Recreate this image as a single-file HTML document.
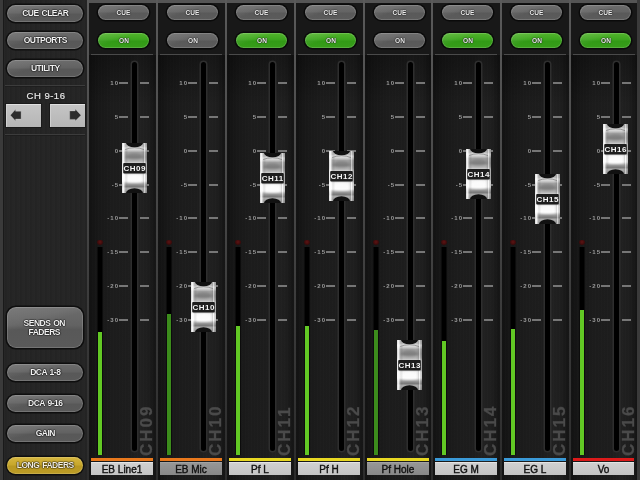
<!DOCTYPE html><html><head><meta charset="utf-8"><style>
*{margin:0;padding:0;box-sizing:border-box}
html,body{width:640px;height:480px;overflow:hidden;background:#1c1c1c;font-family:"Liberation Sans",sans-serif}
#root{position:absolute;left:0;top:0;width:640px;height:480px;will-change:transform;background:#1c1c1c;overflow:hidden}
.a{position:absolute}
#lp{left:3px;top:0;width:84px;height:480px;background:#242424;border-left:1px solid #1a1a1a;
 background-image:repeating-linear-gradient(90deg,rgba(255,255,255,0.01) 0 1px,rgba(0,0,0,0.02) 1px 2px,rgba(0,0,0,0) 2px 3px,rgba(255,255,255,0.006) 3px 5px)}
#lb{left:0;top:0;width:3px;height:480px;background:#3a3a3a}
.btn{position:absolute;left:7px;width:76px;height:17px;border-radius:9px;
 background:linear-gradient(165deg,rgba(255,255,255,0.10) 0%,rgba(255,255,255,0.05) 30%,rgba(255,255,255,0) 42%),linear-gradient(180deg,#6c6c6c 0%,#626262 45%,#585858 55%,#5a5a5a 100%);
 box-shadow:0 0 0 1.5px #0e0e0e, inset 0 0 0 1px rgba(255,255,255,0.16);
 color:#f2f2f2;font-weight:bold;font-size:8.5px;text-align:center;line-height:17px;text-shadow:0 0 1.5px #000,0 0 1px #000,0 0 1px #000}
.btn span{display:inline-block;letter-spacing:-0.5px;word-spacing:1px;margin-right:-0.5px}
.sep{position:absolute;left:5px;width:80px;height:2px;background:#3c3c3c;border-bottom:1px solid #1e1e1e}
.arr{position:absolute;top:104px;width:35px;height:23px;background:linear-gradient(180deg,#c4c4c4,#b6b6b6);
 border-top:1px solid #e0e0e0;border-left:1px solid #d0d0d0;box-shadow:0 0 0 1px #1a1a1a}
.line{top:0;width:2px;height:480px;background:linear-gradient(180deg,#5a5a5a 0%,#4a4a4a 35%,#383838 70%,#2c2c2c 100%)}
.topbg{top:3px;height:51px;background:#181818}
.fadbg{top:55px;height:425px;background:#1b1b1b;
 background-image:linear-gradient(180deg,rgba(0,0,0,0.3) 0,rgba(0,0,0,0) 50px),repeating-linear-gradient(90deg,rgba(255,255,255,0.006) 0 1px,rgba(0,0,0,0.01) 1px 3px),linear-gradient(90deg,#121212 0%,#181818 14%,#1c1c1c 35%,#1d1d1d 60%,#212121 72%,#1e1e1e 88%,#141414 100%)}
.hsep{top:54px;height:1px;background:#4a4a4a}
.sbtn{position:absolute;width:51px;height:15px;border-radius:8px;text-align:center;line-height:15px;font-size:8px;font-weight:bold;color:#f0f0f0;
 box-shadow:0 0 0 1.5px #0a0a0a, inset 0 0 0 1px rgba(255,255,255,0.16);text-shadow:0 0 1.5px #000,0 0 1px #000;}
.sbtn span{display:inline-block;transform:scaleX(0.82)}
.gray{background:linear-gradient(160deg,rgba(255,255,255,0.10) 0%,rgba(255,255,255,0.05) 30%,rgba(255,255,255,0) 42%),linear-gradient(180deg,#6c6c6c 0%,#646464 45%,#595959 55%,#5c5c5c 100%)}
.green{background:linear-gradient(160deg,rgba(255,255,255,0.12) 0%,rgba(255,255,255,0.05) 30%,rgba(255,255,255,0) 42%),linear-gradient(180deg,#52b52c 0%,#3ca41e 45%,#329a16 55%,#379e1a 100%)}
.slot{width:5px;border-radius:2.5px;background:#000;box-shadow:0 0 0 1.5px #2e2e2e}
.tk{height:2px;width:9px;background:#767676}
.sc{font-size:6px;font-weight:bold;color:#9a9a9a;text-align:right;width:27px;letter-spacing:1px;line-height:8px}
.meterbg{width:4px;background:#000;box-shadow:-1px 0 0 #0c0c0c,1px 0 0 #0c0c0c}
.dot{width:6px;height:5px;border-radius:2px 2px 3px 3px;background:radial-gradient(circle at 50% 40%,#5e1414,#360a0a 70%,rgba(30,10,10,0.6))}
.chv{font-size:17px;font-weight:bold;color:#4a4a4a;transform-origin:0 0;transform:rotate(-90deg);white-space:nowrap;line-height:13px;letter-spacing:2px;-webkit-text-stroke:0.3px #4a4a4a}
.bar{height:3px}
.lab{height:13px;font-size:10px;letter-spacing:0px;line-height:13px;-webkit-text-stroke:0.4px #111;text-align:center;color:#111;border-top:1px solid #e4e4e4}
.cap{width:25px;height:50px;overflow:hidden}
.cap .lbl{left:1px;top:20px;width:23px;height:10.5px;color:#f4f4f4;font-size:8px;font-weight:bold;text-align:center;line-height:11px;letter-spacing:0.5px;text-indent:0.5px}
</style></head><body><div id="root">
<svg width="0" height="0" style="position:absolute"><defs>
<linearGradient id="gv" x1="0" y1="0" x2="0" y2="1">
<stop offset="0" stop-color="#b0b0b0"/><stop offset="0.08" stop-color="#c2c2c2"/><stop offset="0.1" stop-color="#e4e4e4"/>
<stop offset="0.14" stop-color="#d0d0d0"/><stop offset="0.19" stop-color="#a2a2a2"/><stop offset="0.28" stop-color="#949494"/>
<stop offset="0.36" stop-color="#a6a6a6"/><stop offset="0.4" stop-color="#cdcdcd"/><stop offset="0.61" stop-color="#c8c8c8"/>
<stop offset="0.64" stop-color="#f4f4f4"/><stop offset="0.76" stop-color="#f8f8f8"/><stop offset="0.82" stop-color="#a8a8a8"/>
<stop offset="0.87" stop-color="#8a8a8a"/><stop offset="0.91" stop-color="#b0b0b0"/><stop offset="1" stop-color="#9c9c9c"/></linearGradient>
<linearGradient id="gh" x1="0" y1="0" x2="1" y2="0">
<stop offset="0" stop-color="#fff" stop-opacity="0.55"/><stop offset="0.06" stop-color="#fff" stop-opacity="0.85"/><stop offset="0.12" stop-color="#fff" stop-opacity="0.2"/><stop offset="0.18" stop-color="#000" stop-opacity="0.06"/><stop offset="0.26" stop-color="#000" stop-opacity="0"/>
<stop offset="0.76" stop-color="#000" stop-opacity="0"/><stop offset="0.84" stop-color="#000" stop-opacity="0.06"/><stop offset="0.9" stop-color="#fff" stop-opacity="0.45"/><stop offset="1" stop-color="#000" stop-opacity="0.15"/></linearGradient>
<filter id="bl" x="-30%" y="-60%" width="160%" height="220%"><feGaussianBlur stdDeviation="1"/></filter>
</defs></svg>
<div class="a" id="lb"></div><div class="a" id="lp"></div>
<div class="btn" style="top:5px;height:17px;line-height:17px"><span>CUE CLEAR</span></div>
<div class="btn" style="top:32px;height:17px;line-height:17px"><span>OUTPORTS</span></div>
<div class="btn" style="top:60px;height:17px;line-height:17px"><span>UTILITY</span></div>
<div class="sep" style="top:85px"></div>
<div class="a" style="left:3px;width:84px;text-align:center;color:#e8e8e8;font-size:9.5px;font-weight:normal;-webkit-text-stroke:0.2px #e8e8e8;line-height:12px;top:90px;padding-left:2px;letter-spacing:0.5px;text-shadow:0 0 1.5px #000">CH 9-16</div>
<div class="arr" style="left:6px"><svg width="35" height="23" style="position:absolute;left:-1px;top:-1px"><polygon points="4.4,11.2 9.6,5.3 9.6,7.3 15.1,7.3 15.1,15.1 9.6,15.1 9.6,16.9" fill="#2c2c2c" stroke="#d8d8d8" stroke-width="0.6" stroke-opacity="0.5"/></svg></div>
<div class="arr" style="left:50px"><svg width="35" height="23" style="position:absolute;left:-1px;top:-1px"><polygon points="31,11.2 25.2,5.1 25.2,6.9 19.7,6.9 19.7,15.4 25.2,15.4 25.2,17.1" fill="#2c2c2c" stroke="#d8d8d8" stroke-width="0.6" stroke-opacity="0.5"/></svg></div>
<div class="sep" style="top:134px"></div>
<div class="btn" style="top:307px;height:41px;border-radius:9px;line-height:9px;padding-top:12px;padding-right:2px"><span>SENDS ON<br>FADERS</span></div>
<div class="btn" style="top:364px"><span>DCA 1-8</span></div>
<div class="btn" style="top:395px"><span>DCA 9-16</span></div>
<div class="btn" style="top:425px"><span>GAIN</span></div>
<div class="btn" style="top:457px;background:linear-gradient(180deg,#d6b640 0%,#c8a82c 45%,#b89822 55%,#bc9c26 100%);color:#f6f0dc"><span>LONG FADERS</span></div>
<div class="a" style="left:87px;top:0;width:553px;height:3px;background:#555"></div>
<div class="a topbg" style="left:89px;width:67px"></div>
<div class="a fadbg" style="left:89px;width:67px"></div>
<div class="a hsep" style="left:91px;width:62px"></div>
<div class="a line" style="left:87px"></div>
<div class="sbtn gray" style="left:98px;top:5px"><span>CUE</span></div>
<div class="sbtn green" style="left:98px;top:33px"><span>ON</span></div>
<div class="a sc" style="left:92px;top:79.2px">10</div>
<div class="a tk" style="left:119px;top:82.2px"></div>
<div class="a tk" style="left:140px;top:82.2px"></div>
<div class="a sc" style="left:92px;top:113.0px">5</div>
<div class="a tk" style="left:119px;top:116.0px"></div>
<div class="a tk" style="left:140px;top:116.0px"></div>
<div class="a sc" style="left:92px;top:146.9px">0</div>
<div class="a tk" style="left:119px;top:149.9px"></div>
<div class="a tk" style="left:140px;top:149.9px"></div>
<div class="a sc" style="left:92px;top:180.5px">-5</div>
<div class="a tk" style="left:119px;top:183.5px"></div>
<div class="a tk" style="left:140px;top:183.5px"></div>
<div class="a sc" style="left:92px;top:214.2px">-10</div>
<div class="a tk" style="left:119px;top:217.2px"></div>
<div class="a tk" style="left:140px;top:217.2px"></div>
<div class="a sc" style="left:92px;top:248.2px">-15</div>
<div class="a tk" style="left:119px;top:251.2px"></div>
<div class="a tk" style="left:140px;top:251.2px"></div>
<div class="a sc" style="left:92px;top:281.8px">-20</div>
<div class="a tk" style="left:119px;top:284.8px"></div>
<div class="a tk" style="left:140px;top:284.8px"></div>
<div class="a sc" style="left:92px;top:315.8px">-30</div>
<div class="a tk" style="left:119px;top:318.8px"></div>
<div class="a tk" style="left:140px;top:318.8px"></div>
<div class="a slot" style="left:132px;top:62px;height:389px"></div>
<div class="a dot" style="left:97px;top:240px"></div>
<div class="a meterbg" style="left:98px;top:247px;height:208px"></div>
<div class="a" style="left:98px;top:332px;width:4px;height:123px;background:#62c824"></div>
<div class="a chv" style="left:140px;top:456px">CH09</div>
<div class="a bar" style="left:91px;top:458px;width:62px;background:#e8781c"></div>
<div class="a lab" style="left:91px;top:462px;width:62px;background:linear-gradient(180deg,#d0d0d0,#c4c4c4);border-top-color:#e4e4e4">EB Line1</div>
<div class="a cap" style="left:122px;top:143px"><svg width="25" height="50" style="position:absolute;left:0;top:0">
<rect width="25" height="50" fill="url(#gv)"/>
<ellipse cx="12.5" cy="13.5" rx="8" ry="3.5" fill="#000" opacity="0.14" filter="url(#bl)"/><rect x="3" y="16.5" width="19" height="2.5" fill="#fff" opacity="0.18" filter="url(#bl)"/>
<path d="M3,6.5 Q12.5,3 22,6.5" stroke="#7a7a7a" stroke-width="0.9" fill="none" opacity="0.8"/>
<ellipse cx="12.5" cy="36" rx="9" ry="4" fill="#fff" opacity="0.6" filter="url(#bl)"/><ellipse cx="12.5" cy="43" rx="9" ry="2.2" fill="#000" opacity="0.12" filter="url(#bl)"/>
<rect width="25" height="50" fill="url(#gh)"/>
<ellipse cx="12.5" cy="-0.5" rx="8.6" ry="4.8" fill="#111"/><ellipse cx="12.5" cy="50.5" rx="8.6" ry="5.2" fill="#111"/>
<rect x="1.2" y="20" width="22.6" height="10.4" rx="1" fill="#1d1d1d"/></svg><div class="a lbl">CH09</div></div>
<div class="a topbg" style="left:158px;width:67px"></div>
<div class="a fadbg" style="left:158px;width:67px"></div>
<div class="a hsep" style="left:160px;width:62px"></div>
<div class="a line" style="left:156px"></div>
<div class="sbtn gray" style="left:167px;top:5px"><span>CUE</span></div>
<div class="sbtn gray" style="left:167px;top:33px"><span>ON</span></div>
<div class="a sc" style="left:161px;top:79.2px">10</div>
<div class="a tk" style="left:188px;top:82.2px"></div>
<div class="a tk" style="left:209px;top:82.2px"></div>
<div class="a sc" style="left:161px;top:113.0px">5</div>
<div class="a tk" style="left:188px;top:116.0px"></div>
<div class="a tk" style="left:209px;top:116.0px"></div>
<div class="a sc" style="left:161px;top:146.9px">0</div>
<div class="a tk" style="left:188px;top:149.9px"></div>
<div class="a tk" style="left:209px;top:149.9px"></div>
<div class="a sc" style="left:161px;top:180.5px">-5</div>
<div class="a tk" style="left:188px;top:183.5px"></div>
<div class="a tk" style="left:209px;top:183.5px"></div>
<div class="a sc" style="left:161px;top:214.2px">-10</div>
<div class="a tk" style="left:188px;top:217.2px"></div>
<div class="a tk" style="left:209px;top:217.2px"></div>
<div class="a sc" style="left:161px;top:248.2px">-15</div>
<div class="a tk" style="left:188px;top:251.2px"></div>
<div class="a tk" style="left:209px;top:251.2px"></div>
<div class="a sc" style="left:161px;top:281.8px">-20</div>
<div class="a tk" style="left:188px;top:284.8px"></div>
<div class="a tk" style="left:209px;top:284.8px"></div>
<div class="a sc" style="left:161px;top:315.8px">-30</div>
<div class="a tk" style="left:188px;top:318.8px"></div>
<div class="a tk" style="left:209px;top:318.8px"></div>
<div class="a slot" style="left:201px;top:62px;height:389px"></div>
<div class="a dot" style="left:166px;top:240px"></div>
<div class="a meterbg" style="left:167px;top:247px;height:208px"></div>
<div class="a" style="left:167px;top:314px;width:4px;height:141px;background:#3c8c1c"></div>
<div class="a chv" style="left:209px;top:456px">CH10</div>
<div class="a bar" style="left:160px;top:458px;width:62px;background:#e8781c"></div>
<div class="a lab" style="left:160px;top:462px;width:62px;background:linear-gradient(180deg,#969696,#888888);border-top-color:#a4a4a4">EB Mic</div>
<div class="a cap" style="left:191px;top:282px"><svg width="25" height="50" style="position:absolute;left:0;top:0">
<rect width="25" height="50" fill="url(#gv)"/>
<ellipse cx="12.5" cy="13.5" rx="8" ry="3.5" fill="#000" opacity="0.14" filter="url(#bl)"/><rect x="3" y="16.5" width="19" height="2.5" fill="#fff" opacity="0.18" filter="url(#bl)"/>
<path d="M3,6.5 Q12.5,3 22,6.5" stroke="#7a7a7a" stroke-width="0.9" fill="none" opacity="0.8"/>
<ellipse cx="12.5" cy="36" rx="9" ry="4" fill="#fff" opacity="0.6" filter="url(#bl)"/><ellipse cx="12.5" cy="43" rx="9" ry="2.2" fill="#000" opacity="0.12" filter="url(#bl)"/>
<rect width="25" height="50" fill="url(#gh)"/>
<ellipse cx="12.5" cy="-0.5" rx="8.6" ry="4.8" fill="#111"/><ellipse cx="12.5" cy="50.5" rx="8.6" ry="5.2" fill="#111"/>
<rect x="1.2" y="20" width="22.6" height="10.4" rx="1" fill="#1d1d1d"/></svg><div class="a lbl">CH10</div></div>
<div class="a topbg" style="left:227px;width:67px"></div>
<div class="a fadbg" style="left:227px;width:67px"></div>
<div class="a hsep" style="left:229px;width:62px"></div>
<div class="a line" style="left:225px"></div>
<div class="sbtn gray" style="left:236px;top:5px"><span>CUE</span></div>
<div class="sbtn green" style="left:236px;top:33px"><span>ON</span></div>
<div class="a sc" style="left:230px;top:79.2px">10</div>
<div class="a tk" style="left:257px;top:82.2px"></div>
<div class="a tk" style="left:278px;top:82.2px"></div>
<div class="a sc" style="left:230px;top:113.0px">5</div>
<div class="a tk" style="left:257px;top:116.0px"></div>
<div class="a tk" style="left:278px;top:116.0px"></div>
<div class="a sc" style="left:230px;top:146.9px">0</div>
<div class="a tk" style="left:257px;top:149.9px"></div>
<div class="a tk" style="left:278px;top:149.9px"></div>
<div class="a sc" style="left:230px;top:180.5px">-5</div>
<div class="a tk" style="left:257px;top:183.5px"></div>
<div class="a tk" style="left:278px;top:183.5px"></div>
<div class="a sc" style="left:230px;top:214.2px">-10</div>
<div class="a tk" style="left:257px;top:217.2px"></div>
<div class="a tk" style="left:278px;top:217.2px"></div>
<div class="a sc" style="left:230px;top:248.2px">-15</div>
<div class="a tk" style="left:257px;top:251.2px"></div>
<div class="a tk" style="left:278px;top:251.2px"></div>
<div class="a sc" style="left:230px;top:281.8px">-20</div>
<div class="a tk" style="left:257px;top:284.8px"></div>
<div class="a tk" style="left:278px;top:284.8px"></div>
<div class="a sc" style="left:230px;top:315.8px">-30</div>
<div class="a tk" style="left:257px;top:318.8px"></div>
<div class="a tk" style="left:278px;top:318.8px"></div>
<div class="a slot" style="left:270px;top:62px;height:389px"></div>
<div class="a dot" style="left:235px;top:240px"></div>
<div class="a meterbg" style="left:236px;top:247px;height:208px"></div>
<div class="a" style="left:236px;top:326px;width:4px;height:129px;background:#62c824"></div>
<div class="a chv" style="left:278px;top:456px">CH11</div>
<div class="a bar" style="left:229px;top:458px;width:62px;background:#e8d822"></div>
<div class="a lab" style="left:229px;top:462px;width:62px;background:linear-gradient(180deg,#d0d0d0,#c4c4c4);border-top-color:#e4e4e4">Pf L</div>
<div class="a cap" style="left:260px;top:153px"><svg width="25" height="50" style="position:absolute;left:0;top:0">
<rect width="25" height="50" fill="url(#gv)"/>
<ellipse cx="12.5" cy="13.5" rx="8" ry="3.5" fill="#000" opacity="0.14" filter="url(#bl)"/><rect x="3" y="16.5" width="19" height="2.5" fill="#fff" opacity="0.18" filter="url(#bl)"/>
<path d="M3,6.5 Q12.5,3 22,6.5" stroke="#7a7a7a" stroke-width="0.9" fill="none" opacity="0.8"/>
<ellipse cx="12.5" cy="36" rx="9" ry="4" fill="#fff" opacity="0.6" filter="url(#bl)"/><ellipse cx="12.5" cy="43" rx="9" ry="2.2" fill="#000" opacity="0.12" filter="url(#bl)"/>
<rect width="25" height="50" fill="url(#gh)"/>
<ellipse cx="12.5" cy="-0.5" rx="8.6" ry="4.8" fill="#111"/><ellipse cx="12.5" cy="50.5" rx="8.6" ry="5.2" fill="#111"/>
<rect x="1.2" y="20" width="22.6" height="10.4" rx="1" fill="#1d1d1d"/></svg><div class="a lbl">CH11</div></div>
<div class="a topbg" style="left:296px;width:67px"></div>
<div class="a fadbg" style="left:296px;width:67px"></div>
<div class="a hsep" style="left:298px;width:62px"></div>
<div class="a line" style="left:294px"></div>
<div class="sbtn gray" style="left:305px;top:5px"><span>CUE</span></div>
<div class="sbtn green" style="left:305px;top:33px"><span>ON</span></div>
<div class="a sc" style="left:299px;top:79.2px">10</div>
<div class="a tk" style="left:326px;top:82.2px"></div>
<div class="a tk" style="left:347px;top:82.2px"></div>
<div class="a sc" style="left:299px;top:113.0px">5</div>
<div class="a tk" style="left:326px;top:116.0px"></div>
<div class="a tk" style="left:347px;top:116.0px"></div>
<div class="a sc" style="left:299px;top:146.9px">0</div>
<div class="a tk" style="left:326px;top:149.9px"></div>
<div class="a tk" style="left:347px;top:149.9px"></div>
<div class="a sc" style="left:299px;top:180.5px">-5</div>
<div class="a tk" style="left:326px;top:183.5px"></div>
<div class="a tk" style="left:347px;top:183.5px"></div>
<div class="a sc" style="left:299px;top:214.2px">-10</div>
<div class="a tk" style="left:326px;top:217.2px"></div>
<div class="a tk" style="left:347px;top:217.2px"></div>
<div class="a sc" style="left:299px;top:248.2px">-15</div>
<div class="a tk" style="left:326px;top:251.2px"></div>
<div class="a tk" style="left:347px;top:251.2px"></div>
<div class="a sc" style="left:299px;top:281.8px">-20</div>
<div class="a tk" style="left:326px;top:284.8px"></div>
<div class="a tk" style="left:347px;top:284.8px"></div>
<div class="a sc" style="left:299px;top:315.8px">-30</div>
<div class="a tk" style="left:326px;top:318.8px"></div>
<div class="a tk" style="left:347px;top:318.8px"></div>
<div class="a slot" style="left:339px;top:62px;height:389px"></div>
<div class="a dot" style="left:304px;top:240px"></div>
<div class="a meterbg" style="left:305px;top:247px;height:208px"></div>
<div class="a" style="left:305px;top:326px;width:4px;height:129px;background:#62c824"></div>
<div class="a chv" style="left:347px;top:456px">CH12</div>
<div class="a bar" style="left:298px;top:458px;width:62px;background:#e8d822"></div>
<div class="a lab" style="left:298px;top:462px;width:62px;background:linear-gradient(180deg,#d0d0d0,#c4c4c4);border-top-color:#e4e4e4">Pf H</div>
<div class="a cap" style="left:329px;top:151px"><svg width="25" height="50" style="position:absolute;left:0;top:0">
<rect width="25" height="50" fill="url(#gv)"/>
<ellipse cx="12.5" cy="13.5" rx="8" ry="3.5" fill="#000" opacity="0.14" filter="url(#bl)"/><rect x="3" y="16.5" width="19" height="2.5" fill="#fff" opacity="0.18" filter="url(#bl)"/>
<path d="M3,6.5 Q12.5,3 22,6.5" stroke="#7a7a7a" stroke-width="0.9" fill="none" opacity="0.8"/>
<ellipse cx="12.5" cy="36" rx="9" ry="4" fill="#fff" opacity="0.6" filter="url(#bl)"/><ellipse cx="12.5" cy="43" rx="9" ry="2.2" fill="#000" opacity="0.12" filter="url(#bl)"/>
<rect width="25" height="50" fill="url(#gh)"/>
<ellipse cx="12.5" cy="-0.5" rx="8.6" ry="4.8" fill="#111"/><ellipse cx="12.5" cy="50.5" rx="8.6" ry="5.2" fill="#111"/>
<rect x="1.2" y="20" width="22.6" height="10.4" rx="1" fill="#1d1d1d"/></svg><div class="a lbl">CH12</div></div>
<div class="a topbg" style="left:365px;width:66px"></div>
<div class="a fadbg" style="left:365px;width:66px"></div>
<div class="a hsep" style="left:367px;width:62px"></div>
<div class="a line" style="left:363px"></div>
<div class="sbtn gray" style="left:374px;top:5px"><span>CUE</span></div>
<div class="sbtn gray" style="left:374px;top:33px"><span>ON</span></div>
<div class="a sc" style="left:368px;top:79.2px">10</div>
<div class="a tk" style="left:395px;top:82.2px"></div>
<div class="a tk" style="left:416px;top:82.2px"></div>
<div class="a sc" style="left:368px;top:113.0px">5</div>
<div class="a tk" style="left:395px;top:116.0px"></div>
<div class="a tk" style="left:416px;top:116.0px"></div>
<div class="a sc" style="left:368px;top:146.9px">0</div>
<div class="a tk" style="left:395px;top:149.9px"></div>
<div class="a tk" style="left:416px;top:149.9px"></div>
<div class="a sc" style="left:368px;top:180.5px">-5</div>
<div class="a tk" style="left:395px;top:183.5px"></div>
<div class="a tk" style="left:416px;top:183.5px"></div>
<div class="a sc" style="left:368px;top:214.2px">-10</div>
<div class="a tk" style="left:395px;top:217.2px"></div>
<div class="a tk" style="left:416px;top:217.2px"></div>
<div class="a sc" style="left:368px;top:248.2px">-15</div>
<div class="a tk" style="left:395px;top:251.2px"></div>
<div class="a tk" style="left:416px;top:251.2px"></div>
<div class="a sc" style="left:368px;top:281.8px">-20</div>
<div class="a tk" style="left:395px;top:284.8px"></div>
<div class="a tk" style="left:416px;top:284.8px"></div>
<div class="a sc" style="left:368px;top:315.8px">-30</div>
<div class="a tk" style="left:395px;top:318.8px"></div>
<div class="a tk" style="left:416px;top:318.8px"></div>
<div class="a slot" style="left:408px;top:62px;height:389px"></div>
<div class="a dot" style="left:373px;top:240px"></div>
<div class="a meterbg" style="left:374px;top:247px;height:208px"></div>
<div class="a" style="left:374px;top:330px;width:4px;height:125px;background:#3c8c1c"></div>
<div class="a chv" style="left:416px;top:456px">CH13</div>
<div class="a bar" style="left:367px;top:458px;width:62px;background:#e8d822"></div>
<div class="a lab" style="left:367px;top:462px;width:62px;background:linear-gradient(180deg,#969696,#888888);border-top-color:#a4a4a4">Pf Hole</div>
<div class="a cap" style="left:397px;top:340px"><svg width="25" height="50" style="position:absolute;left:0;top:0">
<rect width="25" height="50" fill="url(#gv)"/>
<ellipse cx="12.5" cy="13.5" rx="8" ry="3.5" fill="#000" opacity="0.14" filter="url(#bl)"/><rect x="3" y="16.5" width="19" height="2.5" fill="#fff" opacity="0.18" filter="url(#bl)"/>
<path d="M3,6.5 Q12.5,3 22,6.5" stroke="#7a7a7a" stroke-width="0.9" fill="none" opacity="0.8"/>
<ellipse cx="12.5" cy="36" rx="9" ry="4" fill="#fff" opacity="0.6" filter="url(#bl)"/><ellipse cx="12.5" cy="43" rx="9" ry="2.2" fill="#000" opacity="0.12" filter="url(#bl)"/>
<rect width="25" height="50" fill="url(#gh)"/>
<ellipse cx="12.5" cy="-0.5" rx="8.6" ry="4.8" fill="#111"/><ellipse cx="12.5" cy="50.5" rx="8.6" ry="5.2" fill="#111"/>
<rect x="1.2" y="20" width="22.6" height="10.4" rx="1" fill="#1d1d1d"/></svg><div class="a lbl">CH13</div></div>
<div class="a topbg" style="left:433px;width:67px"></div>
<div class="a fadbg" style="left:433px;width:67px"></div>
<div class="a hsep" style="left:435px;width:62px"></div>
<div class="a line" style="left:431px"></div>
<div class="sbtn gray" style="left:442px;top:5px"><span>CUE</span></div>
<div class="sbtn green" style="left:442px;top:33px"><span>ON</span></div>
<div class="a sc" style="left:436px;top:79.2px">10</div>
<div class="a tk" style="left:463px;top:82.2px"></div>
<div class="a tk" style="left:484px;top:82.2px"></div>
<div class="a sc" style="left:436px;top:113.0px">5</div>
<div class="a tk" style="left:463px;top:116.0px"></div>
<div class="a tk" style="left:484px;top:116.0px"></div>
<div class="a sc" style="left:436px;top:146.9px">0</div>
<div class="a tk" style="left:463px;top:149.9px"></div>
<div class="a tk" style="left:484px;top:149.9px"></div>
<div class="a sc" style="left:436px;top:180.5px">-5</div>
<div class="a tk" style="left:463px;top:183.5px"></div>
<div class="a tk" style="left:484px;top:183.5px"></div>
<div class="a sc" style="left:436px;top:214.2px">-10</div>
<div class="a tk" style="left:463px;top:217.2px"></div>
<div class="a tk" style="left:484px;top:217.2px"></div>
<div class="a sc" style="left:436px;top:248.2px">-15</div>
<div class="a tk" style="left:463px;top:251.2px"></div>
<div class="a tk" style="left:484px;top:251.2px"></div>
<div class="a sc" style="left:436px;top:281.8px">-20</div>
<div class="a tk" style="left:463px;top:284.8px"></div>
<div class="a tk" style="left:484px;top:284.8px"></div>
<div class="a sc" style="left:436px;top:315.8px">-30</div>
<div class="a tk" style="left:463px;top:318.8px"></div>
<div class="a tk" style="left:484px;top:318.8px"></div>
<div class="a slot" style="left:476px;top:62px;height:389px"></div>
<div class="a dot" style="left:441px;top:240px"></div>
<div class="a meterbg" style="left:442px;top:247px;height:208px"></div>
<div class="a" style="left:442px;top:341px;width:4px;height:114px;background:#62c824"></div>
<div class="a chv" style="left:484px;top:456px">CH14</div>
<div class="a bar" style="left:435px;top:458px;width:62px;background:#3a9ad8"></div>
<div class="a lab" style="left:435px;top:462px;width:62px;background:linear-gradient(180deg,#d0d0d0,#c4c4c4);border-top-color:#e4e4e4">EG M</div>
<div class="a cap" style="left:466px;top:149px"><svg width="25" height="50" style="position:absolute;left:0;top:0">
<rect width="25" height="50" fill="url(#gv)"/>
<ellipse cx="12.5" cy="13.5" rx="8" ry="3.5" fill="#000" opacity="0.14" filter="url(#bl)"/><rect x="3" y="16.5" width="19" height="2.5" fill="#fff" opacity="0.18" filter="url(#bl)"/>
<path d="M3,6.5 Q12.5,3 22,6.5" stroke="#7a7a7a" stroke-width="0.9" fill="none" opacity="0.8"/>
<ellipse cx="12.5" cy="36" rx="9" ry="4" fill="#fff" opacity="0.6" filter="url(#bl)"/><ellipse cx="12.5" cy="43" rx="9" ry="2.2" fill="#000" opacity="0.12" filter="url(#bl)"/>
<rect width="25" height="50" fill="url(#gh)"/>
<ellipse cx="12.5" cy="-0.5" rx="8.6" ry="4.8" fill="#111"/><ellipse cx="12.5" cy="50.5" rx="8.6" ry="5.2" fill="#111"/>
<rect x="1.2" y="20" width="22.6" height="10.4" rx="1" fill="#1d1d1d"/></svg><div class="a lbl">CH14</div></div>
<div class="a topbg" style="left:502px;width:67px"></div>
<div class="a fadbg" style="left:502px;width:67px"></div>
<div class="a hsep" style="left:504px;width:62px"></div>
<div class="a line" style="left:500px"></div>
<div class="sbtn gray" style="left:511px;top:5px"><span>CUE</span></div>
<div class="sbtn green" style="left:511px;top:33px"><span>ON</span></div>
<div class="a sc" style="left:505px;top:79.2px">10</div>
<div class="a tk" style="left:532px;top:82.2px"></div>
<div class="a tk" style="left:553px;top:82.2px"></div>
<div class="a sc" style="left:505px;top:113.0px">5</div>
<div class="a tk" style="left:532px;top:116.0px"></div>
<div class="a tk" style="left:553px;top:116.0px"></div>
<div class="a sc" style="left:505px;top:146.9px">0</div>
<div class="a tk" style="left:532px;top:149.9px"></div>
<div class="a tk" style="left:553px;top:149.9px"></div>
<div class="a sc" style="left:505px;top:180.5px">-5</div>
<div class="a tk" style="left:532px;top:183.5px"></div>
<div class="a tk" style="left:553px;top:183.5px"></div>
<div class="a sc" style="left:505px;top:214.2px">-10</div>
<div class="a tk" style="left:532px;top:217.2px"></div>
<div class="a tk" style="left:553px;top:217.2px"></div>
<div class="a sc" style="left:505px;top:248.2px">-15</div>
<div class="a tk" style="left:532px;top:251.2px"></div>
<div class="a tk" style="left:553px;top:251.2px"></div>
<div class="a sc" style="left:505px;top:281.8px">-20</div>
<div class="a tk" style="left:532px;top:284.8px"></div>
<div class="a tk" style="left:553px;top:284.8px"></div>
<div class="a sc" style="left:505px;top:315.8px">-30</div>
<div class="a tk" style="left:532px;top:318.8px"></div>
<div class="a tk" style="left:553px;top:318.8px"></div>
<div class="a slot" style="left:545px;top:62px;height:389px"></div>
<div class="a dot" style="left:510px;top:240px"></div>
<div class="a meterbg" style="left:511px;top:247px;height:208px"></div>
<div class="a" style="left:511px;top:329px;width:4px;height:126px;background:#62c824"></div>
<div class="a chv" style="left:553px;top:456px">CH15</div>
<div class="a bar" style="left:504px;top:458px;width:62px;background:#3a9ad8"></div>
<div class="a lab" style="left:504px;top:462px;width:62px;background:linear-gradient(180deg,#d0d0d0,#c4c4c4);border-top-color:#e4e4e4">EG L</div>
<div class="a cap" style="left:535px;top:174px"><svg width="25" height="50" style="position:absolute;left:0;top:0">
<rect width="25" height="50" fill="url(#gv)"/>
<ellipse cx="12.5" cy="13.5" rx="8" ry="3.5" fill="#000" opacity="0.14" filter="url(#bl)"/><rect x="3" y="16.5" width="19" height="2.5" fill="#fff" opacity="0.18" filter="url(#bl)"/>
<path d="M3,6.5 Q12.5,3 22,6.5" stroke="#7a7a7a" stroke-width="0.9" fill="none" opacity="0.8"/>
<ellipse cx="12.5" cy="36" rx="9" ry="4" fill="#fff" opacity="0.6" filter="url(#bl)"/><ellipse cx="12.5" cy="43" rx="9" ry="2.2" fill="#000" opacity="0.12" filter="url(#bl)"/>
<rect width="25" height="50" fill="url(#gh)"/>
<ellipse cx="12.5" cy="-0.5" rx="8.6" ry="4.8" fill="#111"/><ellipse cx="12.5" cy="50.5" rx="8.6" ry="5.2" fill="#111"/>
<rect x="1.2" y="20" width="22.6" height="10.4" rx="1" fill="#1d1d1d"/></svg><div class="a lbl">CH15</div></div>
<div class="a topbg" style="left:571px;width:66px"></div>
<div class="a fadbg" style="left:571px;width:66px"></div>
<div class="a hsep" style="left:573px;width:62px"></div>
<div class="a line" style="left:569px"></div>
<div class="sbtn gray" style="left:580px;top:5px"><span>CUE</span></div>
<div class="sbtn green" style="left:580px;top:33px"><span>ON</span></div>
<div class="a sc" style="left:574px;top:79.2px">10</div>
<div class="a tk" style="left:601px;top:82.2px"></div>
<div class="a tk" style="left:622px;top:82.2px"></div>
<div class="a sc" style="left:574px;top:113.0px">5</div>
<div class="a tk" style="left:601px;top:116.0px"></div>
<div class="a tk" style="left:622px;top:116.0px"></div>
<div class="a sc" style="left:574px;top:146.9px">0</div>
<div class="a tk" style="left:601px;top:149.9px"></div>
<div class="a tk" style="left:622px;top:149.9px"></div>
<div class="a sc" style="left:574px;top:180.5px">-5</div>
<div class="a tk" style="left:601px;top:183.5px"></div>
<div class="a tk" style="left:622px;top:183.5px"></div>
<div class="a sc" style="left:574px;top:214.2px">-10</div>
<div class="a tk" style="left:601px;top:217.2px"></div>
<div class="a tk" style="left:622px;top:217.2px"></div>
<div class="a sc" style="left:574px;top:248.2px">-15</div>
<div class="a tk" style="left:601px;top:251.2px"></div>
<div class="a tk" style="left:622px;top:251.2px"></div>
<div class="a sc" style="left:574px;top:281.8px">-20</div>
<div class="a tk" style="left:601px;top:284.8px"></div>
<div class="a tk" style="left:622px;top:284.8px"></div>
<div class="a sc" style="left:574px;top:315.8px">-30</div>
<div class="a tk" style="left:601px;top:318.8px"></div>
<div class="a tk" style="left:622px;top:318.8px"></div>
<div class="a slot" style="left:614px;top:62px;height:389px"></div>
<div class="a dot" style="left:579px;top:240px"></div>
<div class="a meterbg" style="left:580px;top:247px;height:208px"></div>
<div class="a" style="left:580px;top:310px;width:4px;height:145px;background:#62c824"></div>
<div class="a chv" style="left:622px;top:456px">CH16</div>
<div class="a bar" style="left:573px;top:458px;width:61px;background:#dc1a1a"></div>
<div class="a lab" style="left:573px;top:462px;width:61px;background:linear-gradient(180deg,#d0d0d0,#c4c4c4);border-top-color:#e4e4e4">Vo</div>
<div class="a cap" style="left:603px;top:124px"><svg width="25" height="50" style="position:absolute;left:0;top:0">
<rect width="25" height="50" fill="url(#gv)"/>
<ellipse cx="12.5" cy="13.5" rx="8" ry="3.5" fill="#000" opacity="0.14" filter="url(#bl)"/><rect x="3" y="16.5" width="19" height="2.5" fill="#fff" opacity="0.18" filter="url(#bl)"/>
<path d="M3,6.5 Q12.5,3 22,6.5" stroke="#7a7a7a" stroke-width="0.9" fill="none" opacity="0.8"/>
<ellipse cx="12.5" cy="36" rx="9" ry="4" fill="#fff" opacity="0.6" filter="url(#bl)"/><ellipse cx="12.5" cy="43" rx="9" ry="2.2" fill="#000" opacity="0.12" filter="url(#bl)"/>
<rect width="25" height="50" fill="url(#gh)"/>
<ellipse cx="12.5" cy="-0.5" rx="8.6" ry="4.8" fill="#111"/><ellipse cx="12.5" cy="50.5" rx="8.6" ry="5.2" fill="#111"/>
<rect x="1.2" y="20" width="22.6" height="10.4" rx="1" fill="#1d1d1d"/></svg><div class="a lbl">CH16</div></div>
<div class="a" style="left:637px;top:0;width:3px;height:480px;background:#3a3a3a"></div>
</div></body></html>
